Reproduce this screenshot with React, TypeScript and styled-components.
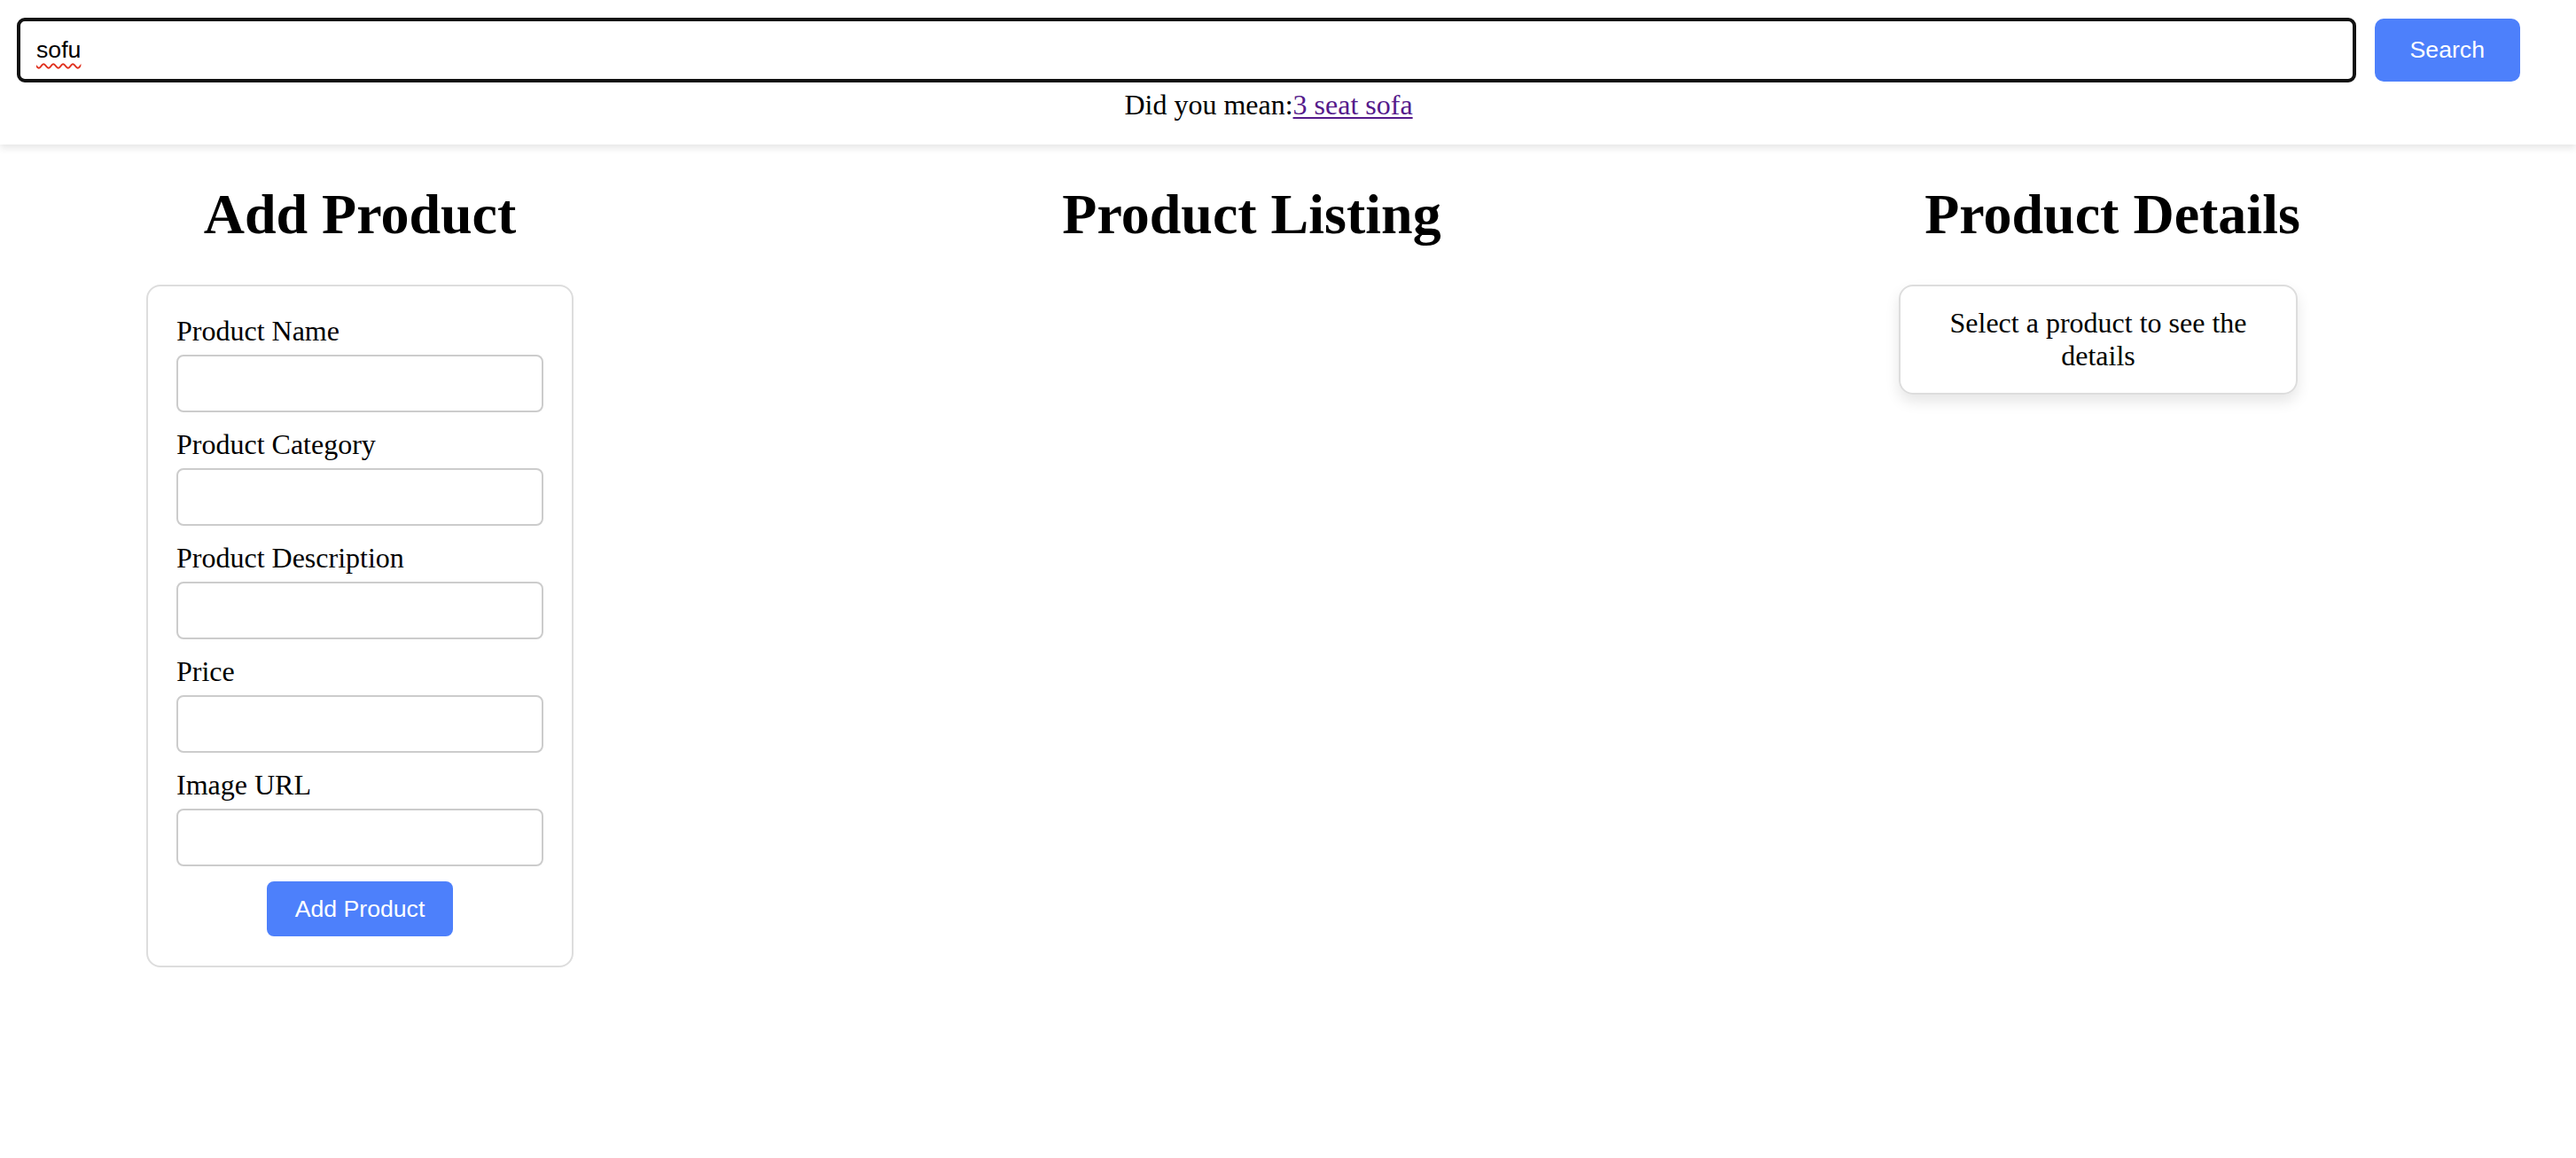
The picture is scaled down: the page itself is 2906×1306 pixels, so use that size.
import React from "react";
import styled, { createGlobalStyle } from "styled-components";

const GlobalStyle = createGlobalStyle`
  html, body {
    margin: 0;
    padding: 0;
    background: #ffffff;
  }
  body {
    font-family: "Liberation Serif", "Times New Roman", serif;
    color: #000000;
  }
  * { box-sizing: border-box; }
`;

const Header = styled.header`
  background: #ffffff;
  box-shadow: 0 4px 8px rgba(0, 0, 0, 0.1);
  padding: 20px 63px 26px 19px;
  position: relative;
  z-index: 1;
`;

const SearchRow = styled.div`
  display: flex;
  align-items: center;
  gap: 21px;
  margin-bottom: 7px;
`;

const SearchField = styled.div`
  position: relative;
  flex: 1;
  display: flex;
`;

const SearchInput = styled.input`
  flex: 1;
  height: 73px;
  border: 4px solid #111111;
  border-radius: 9px;
  padding: 0 18px;
  font-family: "Liberation Sans", Arial, sans-serif;
  font-size: 26.67px;
  color: #000000;
  background: #ffffff;
  outline: none;
`;

const Squiggle = styled.span`
  position: absolute;
  left: 22px;
  top: 50%;
  transform: translateY(-50%);
  font-family: "Liberation Sans", Arial, sans-serif;
  font-size: 26.67px;
  color: transparent;
  text-decoration: underline wavy #e0301e;
  text-decoration-thickness: 2px;
  text-underline-offset: 6px;
  pointer-events: none;
`;

const PrimaryButton = styled.button<{ $size?: "lg" | "md" }>`
  background: #4d80fb;
  color: #ffffff;
  border: none;
  border-radius: ${(p) => (p.$size === "lg" ? "10px" : "8px")};
  font-family: "Liberation Sans", Arial, sans-serif;
  font-size: 26.67px;
  line-height: 30.6px;
  padding: ${(p) => (p.$size === "lg" ? "20px 40px" : "16px 32px")};
  cursor: pointer;
  flex: none;
`;

const Suggestion = styled.div`
  text-align: center;
  font-size: 32px;
  line-height: 37px;
`;

const SuggestionLink = styled.a`
  color: #551a8b;
  text-decoration: underline;
  text-decoration-thickness: 2px;
  text-underline-offset: 3px;
`;

const Main = styled.main`
  display: grid;
  grid-template-columns: 482px 1fr 482px;
  padding: 0 282px 0 165px;
  align-items: start;
`;

const Column = styled.section<{ $shift?: number }>`
  display: flex;
  flex-direction: column;
  align-items: stretch;
  padding-left: ${(p) => p.$shift ?? 0}px;
`;

const Title = styled.h1`
  font-family: "Liberation Serif", "Times New Roman", serif;
  font-size: 64px;
  font-weight: 700;
  line-height: 73.5px;
  text-align: center;
  margin: 42px 0 42px;
  white-space: nowrap;
`;

const FormCard = styled.form`
  border: 2px solid #dddddd;
  border-radius: 16px;
  padding: 32px;
  display: flex;
  flex-direction: column;
`;

const FieldLabel = styled.label`
  font-size: 32px;
  line-height: 37px;
  margin-bottom: 8px;
`;

const FieldInput = styled.input`
  height: 65px;
  border: 2px solid #cccccc;
  border-radius: 8px;
  padding: 0 16px;
  font-size: 26.67px;
  margin-bottom: 18px;
  background: #ffffff;
  outline: none;
`;

const ButtonRow = styled.div`
  display: flex;
  justify-content: center;
  margin-top: -1px;
  margin-bottom: 1px;
`;

const DetailsCard = styled.div`
  width: 450px;
  border: 2px solid #dddddd;
  border-radius: 16px;
  box-shadow: 0 8px 16px rgba(0, 0, 0, 0.1);
  padding: 23px 20px 23px;
  text-align: center;
  font-size: 32px;
  line-height: 37px;
`;

const fields = [
  "Product Name",
  "Product Category",
  "Product Description",
  "Price",
  "Image URL",
];

export default function App() {
  return (
    <>
      <GlobalStyle />
      <Header>
        <SearchRow>
          <SearchField>
            <SearchInput type="text" defaultValue="sofu" spellCheck={false} />
            <Squiggle aria-hidden="true">sofu</Squiggle>
          </SearchField>
          <PrimaryButton $size="lg" type="button">Search</PrimaryButton>
        </SearchRow>
        <Suggestion>
          Did you mean:<SuggestionLink href="#">3 seat sofa</SuggestionLink>
        </Suggestion>
      </Header>
      <Main>
        <Column>
          <Title>Add Product</Title>
          <FormCard onSubmit={(e) => e.preventDefault()}>
            {fields.map((f) => (
              <React.Fragment key={f}>
                <FieldLabel>{f}</FieldLabel>
                <FieldInput type="text" />
              </React.Fragment>
            ))}
            <ButtonRow>
              <PrimaryButton $size="md" type="submit">Add Product</PrimaryButton>
            </ButtonRow>
          </FormCard>
        </Column>
        <Column $shift={35}>
          <Title>Product Listing</Title>
        </Column>
        <Column>
          <Title>Product Details</Title>
          <DetailsCard>Select a product to see the details</DetailsCard>
        </Column>
      </Main>
    </>
  );
}
